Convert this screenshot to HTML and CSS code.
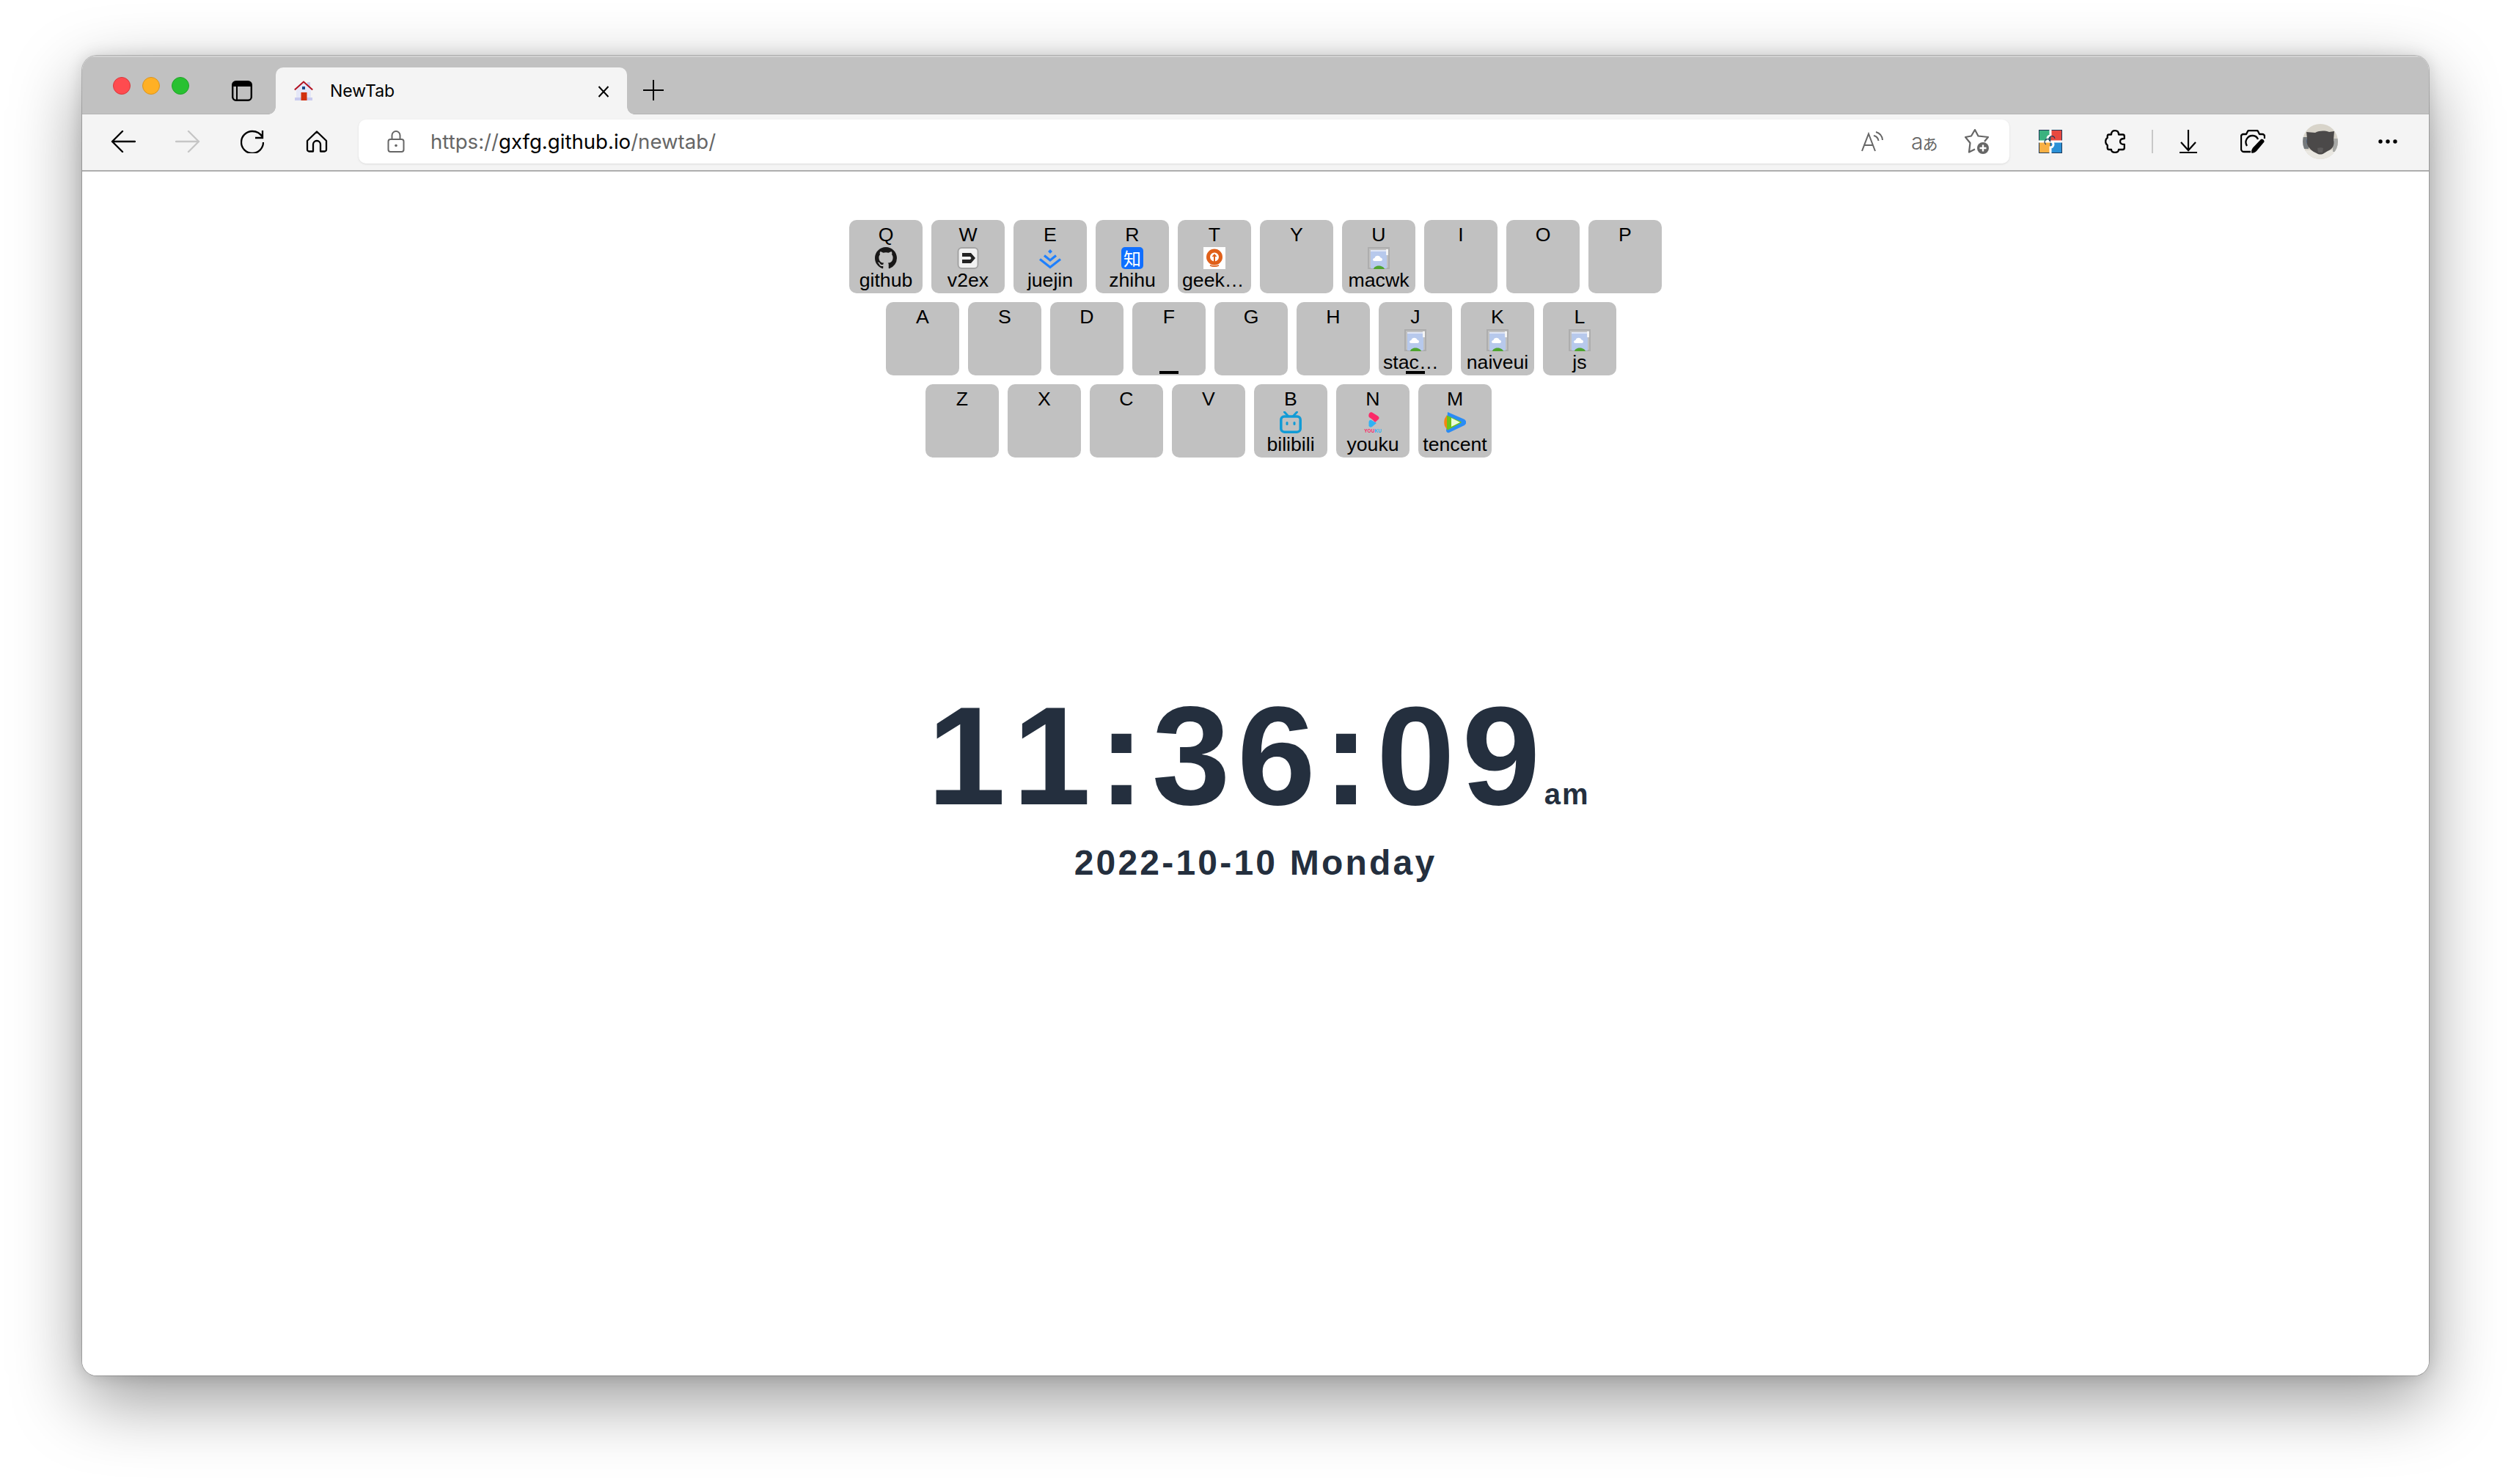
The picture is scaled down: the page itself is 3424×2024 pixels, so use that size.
FILE: index.html
```html
<!DOCTYPE html>
<html lang="en">
<head>
<meta charset="utf-8">
<title>NewTab</title>
<link rel="stylesheet" href="styles.css">
</head>
<body>
<svg class="defs" width="0" height="0" aria-hidden="true">
  <symbol id="broken" viewBox="0 0 30 30">
    <rect x="1" y="1" width="28" height="28" fill="none" stroke="#adadad" stroke-width="2"/>
    <rect x="4" y="4" width="22" height="25" fill="#b7c9ec"/>
    <rect x="4" y="4" width="22" height="2" fill="#dfe6f5"/>
    <rect x="25" y="3" width="3" height="8" fill="#f4f4f4"/>
    <path d="M9 19c-2.600 0-2.600-4 .5-4 .5-4 7-4.500 8-.5 3 0 3.500 4.500 .5 4.500z" fill="#fff"/>
    <path d="M8 30c1-6 13-6 15 0z" fill="#4ea52f"/>
  </symbol>
</svg>
<main class="window">
  <header class="tabstrip">
    <div class="lights">
      <span class="light light-red"></span>
      <span class="light light-yellow"></span>
      <span class="light light-green"></span>
    </div>
    <svg class="sidebar-icon" width="28" height="28" viewBox="0 0 28 28">
      <rect x="1.200" y="1.200" width="25.600" height="25.600" rx="4.500" fill="none" stroke="#000" stroke-width="2.400"/>
      <path d="M1 6a5 5 0 0 1 5-5h16a5 5 0 0 1 5 5v2H1z" fill="#000"/>
      <path d="M7 8v19" stroke="#000" stroke-width="2"/>
    </svg>
    <div class="tab">
      <svg class="favicon" width="26" height="28" viewBox="0 0 26 28">
        <rect x="18" y="2" width="4" height="6" fill="#c9cdf0"/>
        <path d="M3 12L13 2l10 10v12H3z" fill="#e5e7f7"/>
        <rect x="1" y="23" width="24" height="4" fill="#c8caee"/>
        <path d="M.8 12.500L13 1.500l12.200 11" fill="none" stroke="#b2101f" stroke-width="2"/>
        <rect x="11" y="8" width="4" height="4" fill="#1a4a8c"/>
        <rect x="9.500" y="16" width="8" height="11" fill="#d2300f"/>
      </svg>
      <span class="tab-title">NewTab</span>
      <svg class="tab-close" width="16" height="16" viewBox="0 0 16 16"><path d="M1.500 1L14.500 15M14.500 1L1.500 15" stroke="#000" stroke-width="2"/></svg>
    </div>
    <svg class="new-tab" width="28" height="28" viewBox="0 0 28 28"><path d="M14 0v28M0 14h28" stroke="#000" stroke-width="2"/></svg>
  </header>

  <nav class="toolbar">
    <span class="tool"><svg width="34" height="30" viewBox="0 0 34 30"><path d="M33 15H2M16 1L2 15l14 14" fill="none" stroke="#000" stroke-width="2.400" stroke-linecap="round" stroke-linejoin="round"/></svg></span>
    <span class="tool"><svg width="34" height="30" viewBox="0 0 34 30"><path d="M1 15h31M18 1l14 14-14 14" fill="none" stroke="#c6c6c6" stroke-width="2.400" stroke-linecap="round" stroke-linejoin="round"/></svg></span>
    <span class="tool"><svg width="32" height="32" viewBox="0 0 32 32"><path d="M31 17A15 15 0 1 1 16 2c6 0 11 3 14 8" fill="none" stroke="#000" stroke-width="2.300"/><path d="M30 1v10H20" fill="none" stroke="#000" stroke-width="2.300"/></svg></span>
    <span class="tool"><svg width="30" height="30" viewBox="0 0 30 30"><path d="M15 1.500L28 14v12a2.500 2.500 0 0 1-2.500 2.500H20V19a5 5 0 0 0-10 0v9.500H4.500A2.500 2.500 0 0 1 2 26V14z" fill="none" stroke="#000" stroke-width="2.300" stroke-linejoin="round"/></svg></span>

    <div class="omnibox">
      <svg class="lock" width="24" height="30" viewBox="0 0 24 30"><path d="M6.500 12V6.500a5.500 5.500 0 0 1 11 0V12" fill="none" stroke="#666" stroke-width="2"/><rect x="1.500" y="12" width="21" height="17" rx="3" fill="none" stroke="#666" stroke-width="2"/><circle cx="12" cy="20.500" r="1.800" fill="#666"/></svg>
      <span class="url"><span class="url-dim">https://</span>gxfg.github.io<span class="url-dim">/newtab/</span></span>
      <div class="omni-actions">
        <svg width="30" height="28" viewBox="0 0 30 28"><path d="M1 27L10 3.500 19 27M4 19h12" fill="none" stroke="#666" stroke-width="2"/><path d="M17 6c4 1 6 3 6.500 7M20 1c5 1.500 8.500 5 9 11" fill="none" stroke="#666" stroke-width="2"/></svg>
        <span class="translate"><span class="translate-latin">a</span>あ</span>
        <svg width="34" height="34" viewBox="0 0 34 34"><path d="M14 27.500L6 31.500 7.500 19 1 11 9 9.500 14 1l4.500 8.500L32 11l-5 6" fill="none" stroke="#666" stroke-width="2.200" stroke-linejoin="round"/><circle cx="25" cy="26" r="8" fill="#666"/><path d="M25 21.500v9M20.500 26h9" stroke="#fff" stroke-width="2.400"/></svg>
      </div>
    </div>

    <span class="tool">
      <svg width="32" height="32" viewBox="0 0 32 32">
        <rect width="32" height="32" fill="#1f3a5a"/>
        <rect x="1" y="1" width="14.500" height="14.500" fill="#3bb27f"/>
        <rect x="16.500" y="1" width="14.500" height="14.500" fill="#e8483f"/>
        <rect x="1" y="16.500" width="14.500" height="14.500" fill="#f9b044"/>
        <rect x="16.500" y="16.500" width="14.500" height="14.500" fill="#2b90d6"/>
        <path d="M16 0v8a4 4 0 1 0 0 8h-16M16 32v-8a4 4 0 1 0 0-8h16" fill="none" stroke="#fff" stroke-width="3"/>
        <path d="M16 16a4 4 0 1 1 6-4M16 16a4 4 0 1 0-6 4" fill="none" stroke="#1f3a5a" stroke-width="1.200"/>
      </svg>
    </span>
    <span class="tool"><svg width="28" height="32" viewBox="0 0 28 32"><path d="M9 6.500C9 2.500 11 1.200 14 1.200s5 1.300 5 5.300h5.500c1.500 0 2.300 1 2.300 2.300V12C24 12 21 13 21 16s3 4 5.800 4v4.700c0 1.300-.8 2.300-2.300 2.300H19c0 3-2 3.800-5 3.800s-5-.8-5-3.800H6c-1.500 0-2.300-1-2.300-2.300V21C2 20 1.200 18 1.200 16S2 12 3.700 11V8.800C3.700 7.500 4.500 6.500 6 6.500z" fill="none" stroke="#000" stroke-width="2.300" stroke-linejoin="round"/></svg></span>
    <span class="separator"></span>
    <span class="tool"><svg width="24" height="32" viewBox="0 0 24 32"><path d="M12 0v28M2 17l10 11 10-11" fill="none" stroke="#000" stroke-width="2.200"/><path d="M0 31h24" stroke="#000" stroke-width="2.200"/></svg></span>
    <span class="tool"><svg width="34" height="32" viewBox="0 0 34 32"><path d="M14 30H5a4 4 0 0 1-4-4V9a3 3 0 0 1 3-3h4l2-4c.5-1 1-1 2-1h10c1 0 1.500 0 2 1l2 4h4a3 3 0 0 1 3 3v3" fill="none" stroke="#000" stroke-width="2.300" stroke-linejoin="round"/><path d="M9 22a9 9 0 0 1 8-14 8 8 0 0 1 7 5" fill="none" stroke="#000" stroke-width="2.300"/><path d="M28 13c2-1 5 1 4.500 3.500L22 29c-1.500 2-5 3-7 2.500-.5-2 .5-5 2-7z" fill="#000"/></svg></span>
    <span class="tool tool-wide">
      <svg width="48" height="48" viewBox="0 0 48 48">
        <defs><clipPath id="avatar-clip"><circle cx="24" cy="24" r="24"/></clipPath></defs>
        <g clip-path="url(#avatar-clip)">
          <rect width="48" height="48" fill="#d8d4ca"/>
          <rect y="36" width="48" height="12" fill="#e9e7e1"/>
          <rect x="0" y="18" width="8" height="16" fill="#75797c"/>
          <rect x="5" y="21" width="3" height="5" fill="#5a80b5"/>
          <rect x="41" y="20" width="7" height="18" fill="#a7a8a6"/>
          <path d="M5 11l12 1c6-3 13-3 19-1l7-1-1 12c2 7-2 13-8 15l-5 3c-3 2-7 2-10 0C11 37 3 28 6 20z" fill="#4b4949"/>
          <path d="M20 33c3-1 6-1 8 0l-1 6h-6z" fill="#5e5c5c"/>
        </g>
      </svg>
    </span>
    <span class="tool tool-wide"><svg width="26" height="6" viewBox="0 0 26 6"><circle cx="3" cy="3" r="2.700"/><circle cx="13" cy="3" r="2.700"/><circle cx="23" cy="3" r="2.700"/></svg></span>
  </nav>

  <section class="page">
    <div class="keyboard">
      <div class="row">
        <div class="key"><span class="key-letter">Q</span>
          <svg class="key-icon" viewBox="0 0 16 16"><path fill="#181717" d="M8 0C3.580 0 0 3.580 0 8c0 3.540 2.290 6.530 5.470 7.590.4.070.55-.17.55-.38 0-.19-.01-.82-.01-1.490-2.010.37-2.530-.49-2.690-.94-.09-.23-.48-.94-.82-1.130-.28-.15-.68-.52-.01-.53.63-.01 1.080.58 1.230.82.72 1.210 1.870.87 2.330.66.07-.52.28-.87.51-1.070-1.780-.2-3.640-.89-3.640-3.950 0-.87.31-1.590.82-2.150-.08-.2-.36-1.020.08-2.120 0 0 .67-.21 2.200.82.64-.18 1.320-.27 2-.27.68 0 1.360.09 2 .27 1.530-1.040 2.200-.82 2.200-.82.44 1.100.16 1.920.08 2.120.51.56.82 1.270.82 2.150 0 3.070-1.870 3.750-3.650 3.950.29.25.54.73.54 1.480 0 1.070-.01 1.930-.01 2.200 0 .21.15.46.55.38A8.013 8.013 0 0 0 16 8c0-4.420-3.580-8-8-8z"/></svg>
          <span class="key-name">github</span></div>
        <div class="key"><span class="key-letter">W</span>
          <svg class="key-icon" viewBox="0 0 30 30"><rect x="1.500" y="1" width="27" height="28" rx="5" fill="#f1f1f1" stroke="#a3a3a3" stroke-width="2"/><path d="M7 8h12l6 7-6 7H7v-5h11l1.500-2L18 13H7z" fill="#222"/></svg>
          <span class="key-name">v2ex</span></div>
        <div class="key"><span class="key-letter">E</span>
          <svg class="key-icon" viewBox="0 0 30 30"><path d="M15 3l3 3-3 3-3-3z" fill="#1e80ff"/><path d="M7 11.500l8 6.500 8-6.500M1 16.500l14 11 14-11" fill="none" stroke="#1e80ff" stroke-width="3.200"/></svg>
          <span class="key-name">juejin</span></div>
        <div class="key"><span class="key-letter">R</span>
          <span class="key-icon zhihu">知</span>
          <span class="key-name">zhihu</span></div>
        <div class="key"><span class="key-letter">T</span>
          <svg class="key-icon" viewBox="0 0 30 30"><rect width="30" height="30" fill="#fff"/><circle cx="15" cy="13.500" r="8.500" fill="none" stroke="#e0601a" stroke-width="5"/><path d="M15 9l-3.500 4H14v9h2v-9h2.500z" fill="#e0601a"/><path d="M9 25c4 1.500 8 1.500 12 0" fill="none" stroke="#e0601a" stroke-width="1.500"/></svg>
          <span class="key-name key-name-cut">geek…</span></div>
        <div class="key"><span class="key-letter">Y</span></div>
        <div class="key"><span class="key-letter">U</span>
          <svg class="key-icon"><use href="#broken"/></svg>
          <span class="key-name">macwk</span></div>
        <div class="key"><span class="key-letter">I</span></div>
        <div class="key"><span class="key-letter">O</span></div>
        <div class="key"><span class="key-letter">P</span></div>
      </div>
      <div class="row row-home">
        <div class="key"><span class="key-letter">A</span></div>
        <div class="key"><span class="key-letter">S</span></div>
        <div class="key"><span class="key-letter">D</span></div>
        <div class="key key-bump"><span class="key-letter">F</span></div>
        <div class="key"><span class="key-letter">G</span></div>
        <div class="key"><span class="key-letter">H</span></div>
        <div class="key key-bump"><span class="key-letter">J</span>
          <svg class="key-icon"><use href="#broken"/></svg>
          <span class="key-name key-name-cut">stac…</span></div>
        <div class="key"><span class="key-letter">K</span>
          <svg class="key-icon"><use href="#broken"/></svg>
          <span class="key-name">naiveui</span></div>
        <div class="key"><span class="key-letter">L</span>
          <svg class="key-icon"><use href="#broken"/></svg>
          <span class="key-name">js</span></div>
      </div>
      <div class="row row-bottom">
        <div class="key"><span class="key-letter">Z</span></div>
        <div class="key"><span class="key-letter">X</span></div>
        <div class="key"><span class="key-letter">C</span></div>
        <div class="key"><span class="key-letter">V</span></div>
        <div class="key"><span class="key-letter">B</span>
          <svg class="key-icon" viewBox="0 0 30 30"><rect x="1.800" y="7" width="26.400" height="21.200" rx="4.500" fill="none" stroke="#119bd6" stroke-width="3.500"/><path d="M6.500 1l5 5.500M23.500 1l-5 5.500" stroke="#119bd6" stroke-width="3" stroke-linecap="round"/><rect x="8.500" y="14" width="3" height="5" rx="1.500" fill="#119bd6"/><rect x="18.500" y="14" width="3" height="5" rx="1.500" fill="#119bd6"/></svg>
          <span class="key-name">bilibili</span></div>
        <div class="key"><span class="key-letter">N</span>
          <svg class="key-icon" viewBox="0 0 30 30"><path d="M10 3c1-2 3-2 4-1.500l8 5c2 1.500 2 3 .5 4.500L18 15c-2-3-5-5-7.500-6.500C9 7.500 9 5 10 3z" fill="#fb2a68"/><path d="M13 12l7 4-6 5c-2 1.500-4 .5-4.500-1.500V15c0-2 1.500-4 3.500-3z" fill="#2fb2f5"/><text class="youku-mark" x="15" y="29" text-anchor="middle"><tspan fill="#fb2a68">YOU</tspan><tspan fill="#2fb2f5">KU</tspan></text></svg>
          <span class="key-name">youku</span></div>
        <div class="key"><span class="key-letter">M</span>
          <svg class="key-icon" viewBox="0 0 30 30"><path d="M5 1l23 10c3 2 3 6 0 8L7 29c-2 1-4-1-4-3z" fill="#2a8cf5"/><path d="M4 5L1 10c-1 3-1 7 0 10l4 6z" fill="#f7840f"/><path d="M5 6l18 8c1 .5 1 1.500 0 2L6 25c-1 .5-2 0-2-1V7c0-1 0-1.500 1-1z" fill="#6cc318"/><path d="M10 9l12 6-12 6z" fill="#eafbd8"/></svg>
          <span class="key-name">tencent</span></div>
      </div>
    </div>

    <div class="clock">
      <span class="clock-time">11:36:09</span>
      <span class="clock-period">am</span>
    </div>
    <div class="clock-date">2022-10-10 Monday</div>
  </section>
</main>
</body>
</html>
```

FILE: styles.css
```css
* { box-sizing: border-box; }

html, body {
  margin: 0;
  height: 100%;
  overflow: hidden;
  background: #fff;
}

body {
  padding: 76px 112px 148px;
  font-family: "Liberation Sans", Arial, sans-serif;
}

.defs { position: absolute; }

.window {
  width: 3200px;
  height: 1800px;
  display: flex;
  flex-direction: column;
  border-radius: 20px;
  overflow: hidden;
  background: #fff;
  box-shadow: 0 0 0 1px rgba(0, 0, 0, .2), 0 0 22px rgba(0, 0, 0, .14), 0 34px 96px rgba(0, 0, 0, .4);
}

/* Tab strip */
.tabstrip {
  height: 80px;
  flex: none;
  display: flex;
  align-items: flex-start;
  padding-left: 42px;
  background: #c1c1c1;
  box-shadow: inset 0 2px 0 #d2d2d2, inset 0 -1px 0 #b4b4b4;
}

.lights { display: flex; gap: 16px; margin-top: 29px; }

.light {
  width: 24px;
  height: 24px;
  border-radius: 50%;
  border: 1px solid;
}
.light-red { background: #ff4b4f; border-color: #d9383c; }
.light-yellow { background: #ffb024; border-color: #d99420; }
.light-green { background: #28c131; border-color: #22a32a; }

.sidebar-icon { margin: 34px 0 0 58px; flex: none; }

.tab {
  position: relative;
  width: 479px;
  height: 64px;
  margin: 16px 0 0 32px;
  padding: 0 24px 0 25px;
  display: flex;
  align-items: center;
  background: #f4f4f4;
  border-radius: 10px 10px 0 0;
}
.tab::before, .tab::after {
  content: "";
  position: absolute;
  bottom: 0;
  width: 10px;
  height: 10px;
}
.tab::before { left: -10px; background: radial-gradient(circle at 0 0, transparent 9.500px, #f4f4f4 10px); }
.tab::after { right: -10px; background: radial-gradient(circle at 100% 0, transparent 9.500px, #f4f4f4 10px); }

.favicon { flex: none; }

.tab-title {
  margin-left: 23px;
  font: 400 23px Inter, "Liberation Sans", sans-serif;
  color: #000;
}

.tab-close { margin: 2px 0 0 auto; }

.new-tab { margin: 33px 0 0 22px; flex: none; }

/* Toolbar */
.toolbar {
  height: 78px;
  flex: none;
  display: flex;
  align-items: center;
  padding: 0 12px 2px;
  background: #f4f4f4;
  border-bottom: 2px solid #aeaeae;
}

.tool {
  width: 88px;
  height: 48px;
  flex: none;
  display: flex;
  align-items: center;
  justify-content: center;
}
.tool-wide { margin-left: 4px; }

.omnibox {
  flex: 1;
  height: 60px;
  margin: 0 12px 0 13px;
  padding: 0 27px 0 39px;
  display: flex;
  align-items: center;
  background: #fff;
  border-radius: 10px;
  box-shadow: 0 1px 3px rgba(0, 0, 0, .1);
}

.lock { flex: none; }

.url {
  margin-left: 35px;
  font: 400 27.600px Inter, "Liberation Sans", sans-serif;
  color: #000;
}
.url-dim { color: #666; }

.omni-actions {
  margin-left: auto;
  display: flex;
  align-items: center;
  gap: 38px;
}

.translate {
  width: 35px;
  font: 400 21px "Noto Sans CJK JP", "Noto Sans", sans-serif;
  color: #666;
  white-space: nowrap;
  letter-spacing: -1px;
}
.translate-latin { font: 300 30px Inter, sans-serif; }

.separator {
  width: 2px;
  height: 32px;
  margin: 0 4px 0 6px;
  background: #c8c8c8;
  flex: none;
}

/* Page */
.page {
  flex: 1;
  display: flex;
  flex-direction: column;
  align-items: center;
  padding-top: 66px;
  background: #fff;
  color: #242f3e;
}

.keyboard {
  width: 1108px;
  display: flex;
  flex-direction: column;
  gap: 12px;
}

.row { display: flex; gap: 12px; }
.row-home { padding-left: 50px; }
.row-bottom { padding-left: 104px; }

.key {
  position: relative;
  width: 100px;
  height: 100px;
  flex: none;
  padding: 5px 6px 0;
  display: flex;
  flex-direction: column;
  align-items: center;
  background: #c1c1c1;
  border-radius: 10px;
  color: #000;
  font-size: 26.670px;
}

.key-bump::after {
  content: "";
  position: absolute;
  left: 37px;
  bottom: 2px;
  width: 26px;
  height: 4px;
  background: #000;
}

.key-letter {
  height: 32px;
  line-height: 31px;
  flex: none;
}

.key-icon {
  display: block;
  width: 30px;
  height: 30px;
  flex: none;
}

.key-name {
  width: 100%;
  height: 30px;
  line-height: 30px;
  text-align: center;
  white-space: nowrap;
  flex: none;
}
.key-name-cut { text-align: left; }

.zhihu {
  border-radius: 5px;
  background: #0f6fff;
  color: #fff;
  font: 400 24px/29px "Noto Sans CJK SC", sans-serif;
  text-align: center;
}

.youku-mark {
  font: 700 6.500px "Liberation Sans", sans-serif;
}

/* Clock */
.clock {
  margin: 311px 0 0 8px;
  display: flex;
  align-items: baseline;
  font-weight: 700;
  font-kerning: none;
  line-height: 1;
}
.clock-time { font-size: 192px; letter-spacing: 9.600px; }
.clock-period { font-size: 40px; letter-spacing: 2px; margin-left: -4px; }

.clock-date {
  margin-top: 26px;
  font-size: 48px;
  line-height: 1;
  font-weight: 700;
  font-kerning: none;
  letter-spacing: 3.200px;
}
```
